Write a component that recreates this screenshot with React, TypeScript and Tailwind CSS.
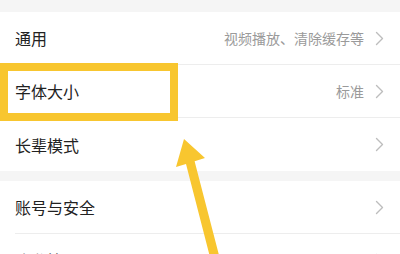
import React from "react";

const Chevron = () => (
  <svg width="9" height="15" viewBox="0 0 9 15" className="shrink-0">
    <polyline points="1.5,1.5 7.5,7.5 1.5,13.5" fill="none" stroke="#bdbdbd" strokeWidth="1.4" strokeLinecap="round" strokeLinejoin="round" />
  </svg>
);

function Row({ label, value, divider = true }: { label: string; value?: string; divider?: boolean }) {
  return (
    <div className="bg-white pl-[15px]">
      <div className={`flex h-[53px] items-center pr-[16px] ${divider ? "border-b border-[#ededed]" : ""}`}>
        <span className="flex-1 text-[16px] text-[#222]">{label}</span>
        {value && <span className="mr-[11px] text-[14px] text-[#9a9a9a]">{value}</span>}
        <Chevron />
      </div>
    </div>
  );
}

export default function App() {
  return (
    <div
      className="relative h-[254px] w-[400px] overflow-hidden bg-[#f5f5f5]"
      style={{ fontFamily: '"Noto Sans CJK SC", "Noto Sans", sans-serif' }}
    >
      <div className="h-[12px]" />
      <Row label="通用" value="视频播放、清除缓存等" />
      <Row label="字体大小" value="标准" />
      <Row label="长辈模式" divider={false} />
      <div className="h-[10px]" />
      <Row label="账号与安全" />
      <Row label="隐私管理" />

      <div className="absolute left-0 top-[63px] h-[58px] w-[178px] border-[8px] border-[#f8c62f]" />
      <svg className="absolute left-0 top-0" width="400" height="254" viewBox="0 0 400 254">
        <polygon
          points="184,139 205,158 194.6,161.3 220,259 211,261 186,164.1 176,167"
          fill="#f8c62f"
        />
      </svg>
    </div>
  );
}
